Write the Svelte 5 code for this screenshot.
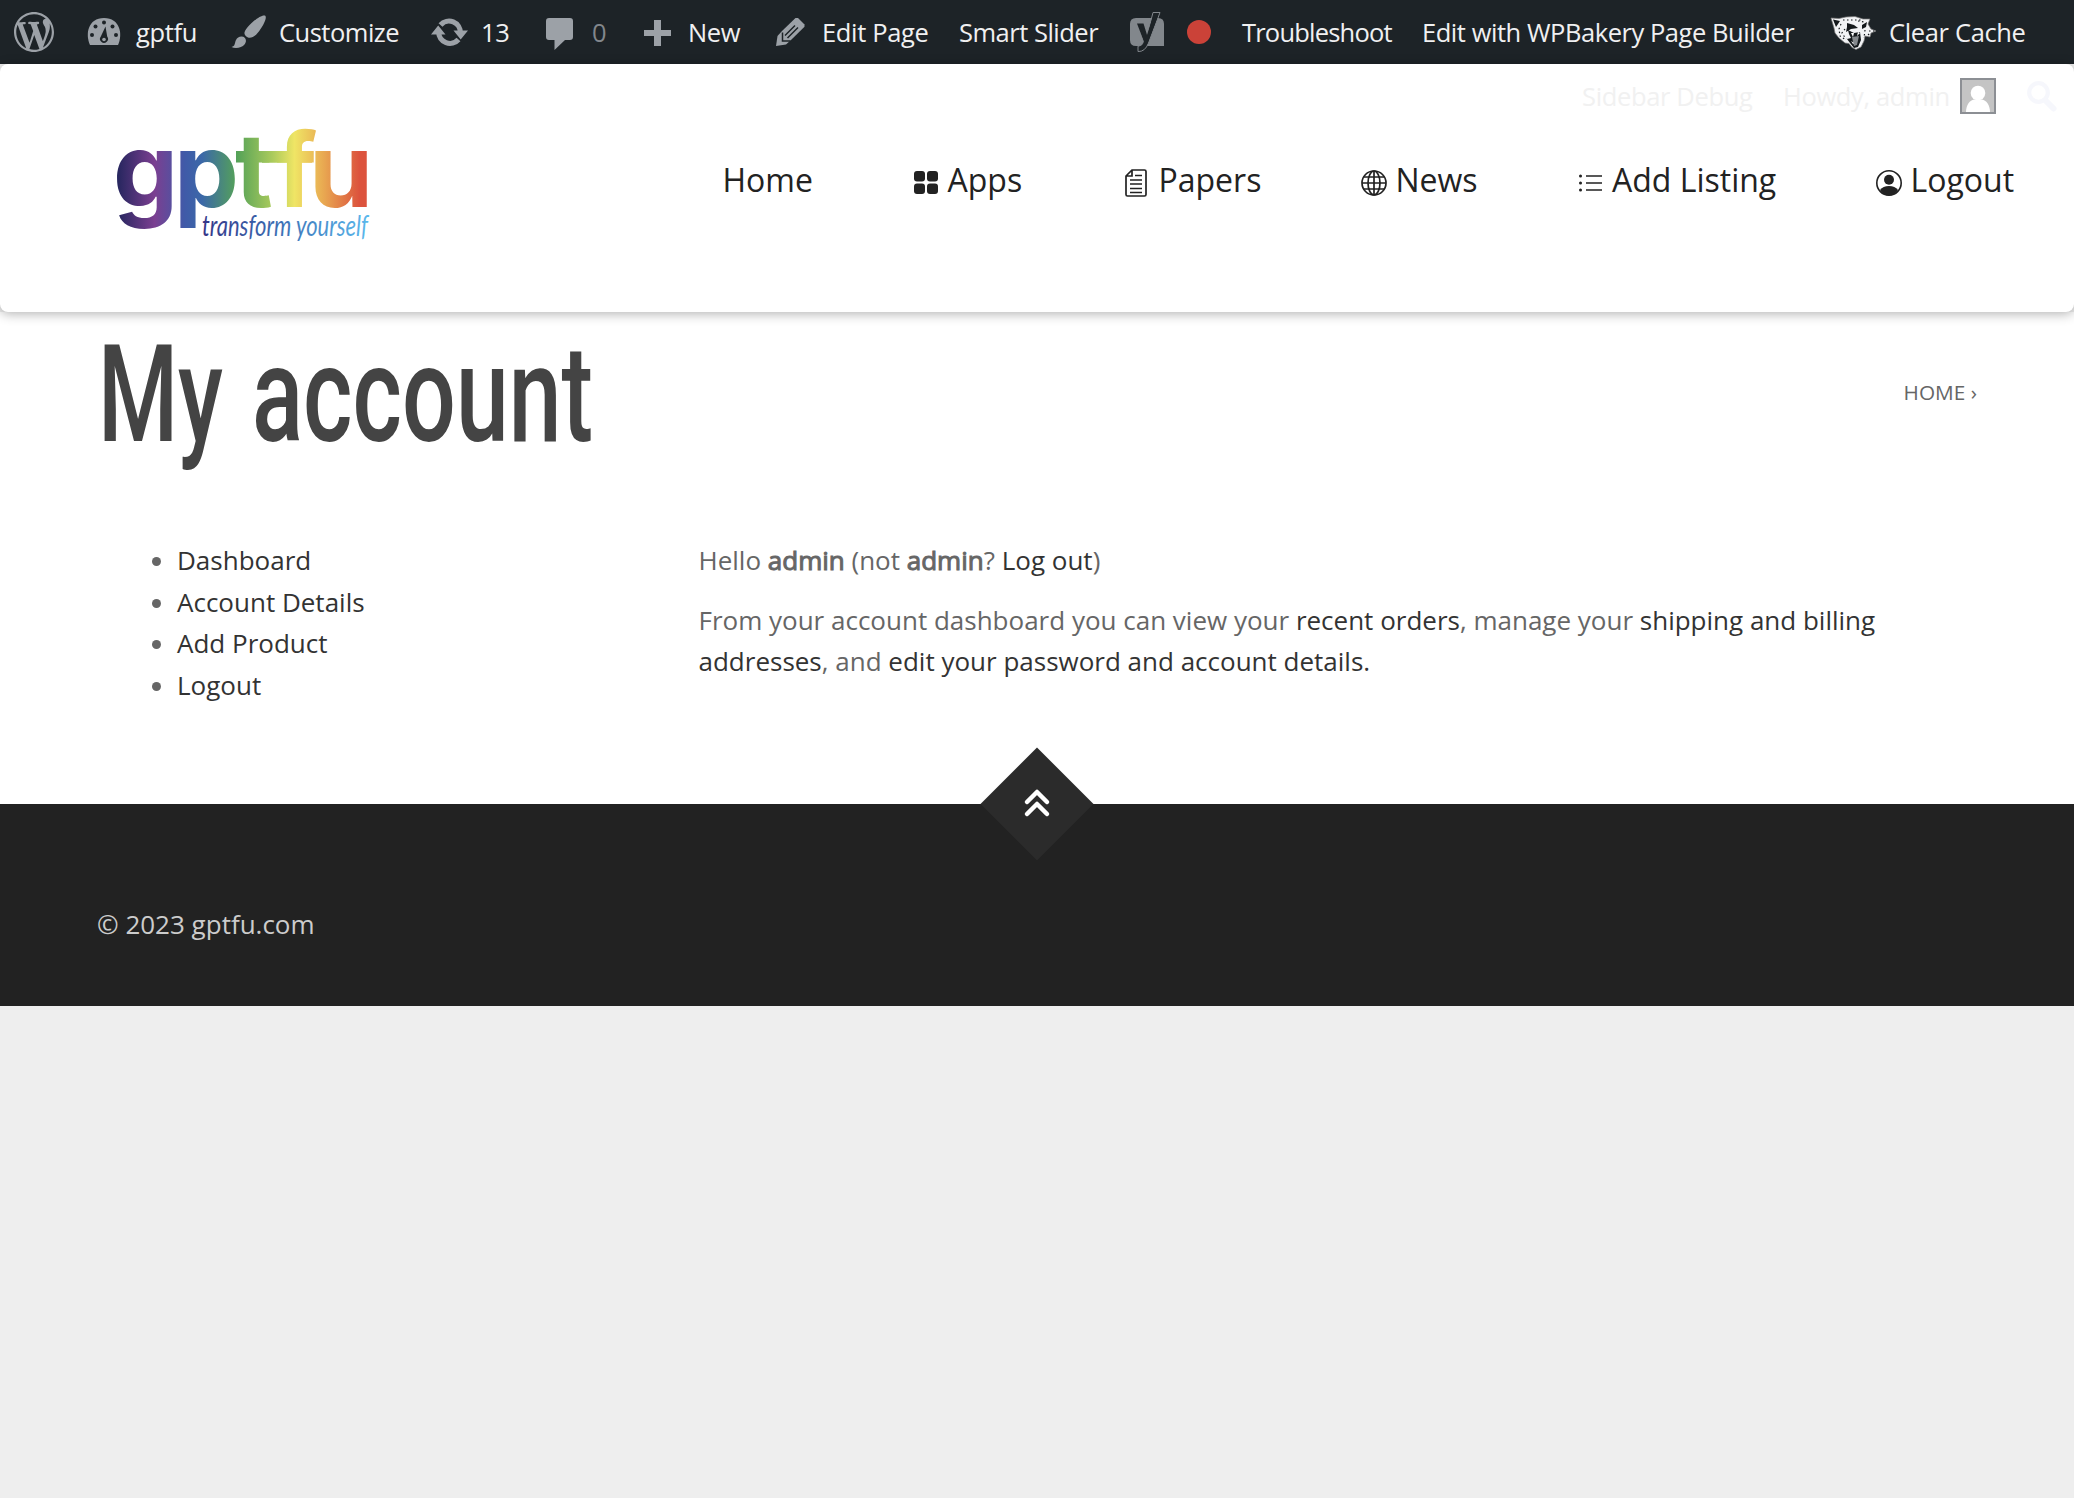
<script>
  const account = ['Dashboard', 'Account Details', 'Add Product', 'Logout'];
</script>

<div class="adminbar">
  <svg class="wp" viewBox="0 0 20 20"><path fill="#9ca1a7" fill-rule="evenodd" d="M20 10c0-5.51-4.49-10-10-10C4.48 0 0 4.49 0 10c0 5.52 4.48 10 10 10 5.51 0 10-4.48 10-10zM7.78 15.37L4.37 6.22c.55-.02 1.17-.08 1.17-.08.5-.06.44-1.13-.06-1.11 0 0-1.45.11-2.37.11-.18 0-.37 0-.58-.01C4.12 2.69 6.87 1.11 10 1.11c2.33 0 4.45.87 6.05 2.34-.68-.11-1.65.39-1.65 1.58 0 .74.45 1.36.9 2.1.35.61.55 1.36.55 2.46 0 1.49-1.4 5-1.4 5l-3.03-8.37c.54-.02.82-.17.82-.17.5-.05.44-1.25-.06-1.22 0 0-1.44.12-2.38.12-.87 0-2.33-.12-2.33-.12-.5-.03-.56 1.2-.06 1.22l.92.08 1.26 3.41zM17.41 10c.24-.64.74-1.87.43-4.25.7 1.29 1.05 2.71 1.05 4.25 0 3.29-1.73 6.24-4.4 7.78.97-2.59 1.94-5.2 2.92-7.78zM6.1 18.09C3.12 16.65 1.11 13.53 1.11 10c0-1.3.23-2.48.72-3.59C3.25 10.3 4.67 14.2 6.1 18.09zm4.03-6.63l2.58 6.98c-.86.29-1.76.45-2.71.45-.79 0-1.57-.11-2.29-.33.81-2.38 1.62-4.74 2.42-7.1z"/></svg>
  <svg class="dash" viewBox="0 0 34 28"><path fill="#9ca1a7" d="M3 27C-2 16 1 0 17 0s19 16 14 27z"/><g fill="#1d2327"><circle cx="17" cy="4.500" r="2"/><circle cx="8.500" cy="8.500" r="2"/><circle cx="25.500" cy="8.500" r="2"/><circle cx="5" cy="17" r="2"/><circle cx="29" cy="17" r="2"/><path d="M18.500 8.500l1.700 10a4 4 0 1 1-6.400 0z"/></g><circle cx="17" cy="21.500" r="1.800" fill="#9ca1a7"/></svg>
  <span class="t site">gptfu</span>
  <svg class="brush" viewBox="0 0 36 34"><path fill="#9ca1a7" d="M34 .5c3 2-3 12-7 17-3 4-7 6-10 5-2-1-4-3-3.500-5C15 12 29-1 34 .5zM10.500 21.500c4 0 6 4 3 8C11 33 4 34 .5 32c4-1 3-4 4.500-7 1-2 3-3.500 5.500-3.500z"/></svg>
  <span class="t customize">Customize</span>
  <svg class="sync" viewBox="0 0 37 29"><g fill="none" stroke="#9ca1a7" stroke-width="5.200"><path d="M9.500 7a11.300 11.300 0 0 1 19.800 8"/><path d="M27.500 21.500A11.300 11.300 0 0 1 7.700 14"/></g><path fill="#9ca1a7" d="M22.500 12.500H37l-7.300 9zM0 16.500h14.500l-7.300-9z"/></svg>
  <span class="t updates">13</span>
  <svg class="bubble" viewBox="0 0 28 32"><path fill="#9ca1a7" d="M3 0h21q3 0 3 3v16q0 3-3 3h-5L8.500 32V22H3q-3 0-3-3V3q0-3 3-3z"/></svg>
  <span class="t count">0</span>
  <svg class="plus" viewBox="0 0 27 26"><path fill="#9ca1a7" d="M10 0h7v10h10v6H17v10h-7V16H0v-6h10z"/></svg>
  <span class="t new">New</span>
  <svg class="pencil" viewBox="0 0 29 28"><path fill="#9ca1a7" d="M19.500 0h2.500l6.500 6.500v2.200L15 22 10 26.500 0 28 1.500 18 6 13z"/><path stroke="#1d2327" stroke-width="1.500" fill="none" d="M9 17.500L19 7.500M11.500 20L22 9.500M6.500 14.500v8.500h8"/></svg>
  <span class="t editpage">Edit Page</span>
  <span class="t slider">Smart Slider</span>
  <svg class="yoast" viewBox="0 0 34 41"><path fill="#82878c" d="M6 6h22q6 0 6 6v22H6q-6 0-6-6V12q0-6 6-6z"/><path fill="#1d2327" stroke="#82878c" stroke-width="1" d="M23 .5h7L18.500 31Q15 40 8 39.500v-5.300q5-.5 5.500-5L7.500 12h6l3.500 11.500z"/><path fill="#1d2327" d="M7 11.500h6.500L17 23l6-18h4.500L17.500 31Q14 38 9 38.500v-3.500q4.500-1 5-5.500z"/></svg>
  <i class="dot"></i>
  <span class="t trouble">Troubleshoot</span>
  <span class="t bakery">Edit with WPBakery Page Builder</span>
  <svg class="cat" viewBox="0 0 45 34"><path fill="#f2f3f5" stroke="#777" stroke-width=".7" d="M0 2l8 .5L15 1l9-.5 8 2.500 7 0-2 5 3 5 5 2-5 2-1 4-5-1-1 5-3 6-5 2.500-4-2-3-4-4-.5-6-5-4-5-1-5z"/><path fill="#15191c" d="M2 3.500l7 1.500-4 6zM16 7l7 2 4 3-7 1-5 3 1-5zM31 9l5-3-1 5-4 2zM17 14l6 3 6-1 1 8-3 7-4 1-4-5-3-4 4-1-2-4z"/><path fill="#85898d" d="M21 21l7-1-2 9-3 1-1-4z"/><path fill="#fff" d="M20 17l2 4 1-4zM27 16l-1 4 3-3zM20 25l2 3 1-1z"/><path stroke="#15191c" stroke-width="1.200" fill="none" stroke-dasharray="1.500 2.500" d="M12 4h18M10 8l-2 5 1 7 6 4M14 13l-3 4 4 6M34 14l-1 8M27 5l6 1M38 15h5m-6 3 4 3"/></svg>
  <span class="t cache">Clear Cache</span>
</div>

<header>
  <div class="secondary">
    <span class="t debug">Sidebar Debug</span>
    <span class="t howdy">Howdy, admin</span>
    <svg class="avatar" viewBox="0 0 36 36"><path fill="#c4c4c4" stroke="#8c8f94" stroke-width="2" d="M1 1h34v34H1z"/><circle cx="18" cy="15" r="7.300" fill="#fff"/><path fill="#fff" d="M6 34c0-7 4-12 8-12.500h8c4 .5 8 5.500 8 12.500z"/></svg>
    <svg class="search" viewBox="0 0 30 31"><g fill="none" stroke="#f6f7fc"><circle cx="11.500" cy="11.500" r="9.300" stroke-width="4.200"/><path stroke-width="6" stroke-linecap="round" d="M19.500 20.500l7 7"/></g></svg>
  </div>
  <div class="mainrow">
    <svg class="logo" viewBox="110 120 270 135">
      <defs>
        <linearGradient id="rainbow" gradientUnits="userSpaceOnUse" x1="117" x2="367" y1="0" y2="0"><stop offset="0" stop-color="#25265e"/><stop offset=".15" stop-color="#7b3f91"/><stop offset=".27" stop-color="#405aa8"/><stop offset=".34" stop-color="#3b68a8"/><stop offset=".48" stop-color="#55a258"/><stop offset=".62" stop-color="#a9ca5c"/><stop offset=".71" stop-color="#efe565"/><stop offset=".82" stop-color="#e9ac52"/><stop offset=".97" stop-color="#dc533d"/></linearGradient>
        <linearGradient id="tag" gradientUnits="userSpaceOnUse" x1="200" x2="370" y1="0" y2="0"><stop offset="0" stop-color="#343486"/><stop offset=".45" stop-color="#3c6db3"/><stop offset="1" stop-color="#5bb9ed"/></linearGradient>
      </defs>
      <text class="word" y="207" x="113 174 235 276 309" fill="url(#rainbow)">gptfu</text>
      <path fill="url(#rainbow)" d="M262 151h50v11.700h-50z"/>
      <text class="tagline" x="202" y="236" textLength="166" lengthAdjust="spacingAndGlyphs" fill="url(#tag)">transform yourself</text>
    </svg>
    <nav>
      <a class="home">Home</a>
      <a class="apps"><svg width="24" height="23" viewBox="0 0 24 23" fill="#222"><rect width="11" height="10.500" rx="3"/><rect x="13" width="11" height="10.500" rx="3"/><rect y="12.500" width="11" height="10.500" rx="3"/><rect x="13" y="12.500" width="11" height="10.500" rx="3"/></svg>Apps</a>
      <a class="papers"><svg width="22" height="28" viewBox="0 0 22 28" fill="none" stroke="#222" stroke-width="1.700"><path d="M7 1h12.500Q21 1 21 2.500v23q0 1.500-1.500 1.500h-17Q1 27 1 25.500V7zM7 1v6H1M10 6.500h7M5 11h12M5 15h12M5 19.500h12M5 23.500h12"/></svg>Papers</a>
      <a class="news"><svg width="26" height="26" viewBox="0 0 26 26" fill="none" stroke="#222" stroke-width="1.700"><circle cx="13" cy="13" r="12"/><ellipse cx="13" cy="13" rx="6" ry="12"/><path d="M13 1v24M1 13h24M3 7h20M3 19h20"/></svg>News</a>
      <a class="add"><svg width="23" height="18" viewBox="0 0 23 18" fill="none" stroke="#222" stroke-width="1.600"><path d="M7 2h16M7 9h16M7 16h16"/><path stroke-width="3" stroke-linecap="round" d="M1.500 2h.01M1.500 9h.01M1.500 16h.01"/></svg>Add Listing</a>
      <a class="logout"><svg width="26" height="26" viewBox="0 0 26 26"><circle cx="13" cy="13" r="12.200" fill="none" stroke="#222" stroke-width="1.600"/><circle cx="13" cy="9.700" r="5" fill="#222"/><path fill="#222" d="M4 20q3-4 9-4t9 4q-3 5.500-9 5.500T4 20z"/></svg>Logout</a>
    </nav>
  </div>
</header>

<main>
  <div class="titlebar">
    <h1><svg viewBox="97 312 520 160"><text x="98" y="441" textLength="125" lengthAdjust="spacingAndGlyphs">My</text><text x="252" y="441" textLength="341" lengthAdjust="spacingAndGlyphs">account</text></svg></h1>
    <span class="crumb">HOME ›</span>
  </div>
  <div class="content">
    <ul>
      {#each account as item}<li><a>{item}</a></li>{/each}
    </ul>
    <section>
      <p>Hello <strong>admin</strong> (not <strong>admin</strong>? <a>Log out</a>)</p>
      <p>From your account dashboard you can view your <a>recent orders</a>, manage your <a>shipping and billing addresses</a>, and <a>edit your password and account details.</a></p>
    </section>
  </div>
</main>

<footer>
  <svg class="top" viewBox="0 0 114 114"><path fill="#2b2b2b" d="M57 .5l56.500 56.500L57 113.500.5 57z"/><path fill="none" stroke="#fff" stroke-width="4.500" stroke-linecap="round" stroke-linejoin="round" d="M47 55l10-10 10 10M47 67l10-10 10 10"/></svg>
  <span>© 2023 gptfu.com</span>
</footer>

<style>
  :global(body) { background: #eee; font-family: "Open Sans", sans-serif; }
  svg { display: block; flex: none; overflow: visible; }
  .adminbar { height: 64px; background: #1d2327; display: flex; align-items: center; color: #f0f0f1; }
  .adminbar .t, .secondary .t { font-size: 25.5px; line-height: 64px; white-space: nowrap; flex: none; letter-spacing: -0.35px; height: 64px; }
  .wp { width: 40px; margin-left: 14px; }
  .dash { width: 34px; margin: 0 14px 0 33px; }
  .site { width: 95px; margin-left: 1px; }
  .brush { width: 36px; }
  .adminbar .customize { width: 138px; margin: 0 14px 0 12px; letter-spacing: -0.5px; }
  .sync { width: 37px; }
  .updates { width: 51px; margin-left: 13px; }
  .bubble { width: 28px; margin-left: 14px; margin-top: 4px; }
  .count { width: 37px; margin-left: 18px; color: #82878c; }
  .plus { width: 27px; margin-left: 15px; margin-top: 2px; }
  .new { width: 72px; margin-left: 17px; }
  .pencil { width: 29px; margin-left: 16px; }
  .editpage { width: 137px; margin-left: 17px; }
  .adminbar .slider { width: 157px; letter-spacing: -0.5px; }
  .yoast { width: 34px; margin-left: 14px; }
  .dot { width: 24px; height: 24px; border-radius: 50%; background: #cb4238; margin: 0 31px 0 23px; flex: none; }
  .adminbar .trouble { width: 180px; letter-spacing: -0.8px; }
  .adminbar .bakery { width: 396px; letter-spacing: -0.45px; }
  .cat { width: 45px; margin: 2px 0 0 13px; }
  .cache { margin-left: 13px; }
  header { height: 248px; background: #fff; border-radius: 8px; box-shadow: 0 2px 12px rgba(0,0,0,.3); position: relative; }
  .secondary { height: 64px; display: flex; align-items: center; justify-content: flex-end; padding-right: 17px; color: #f1f1f1; }
  .debug { width: 201px; }
  .howdy { width: 177px; }
  .avatar { width: 36px; margin-right: 31px; }
  .search { width: 30px; }
  .mainrow { display: flex; }
  .logo { width: 270px; height: 135px; margin: -8px 0 0 110px; }
  .word { font: 700 103px Inter, sans-serif; }
  .tagline { font: italic 400 28px Lato, sans-serif; }
  nav { display: flex; font-size: 32px; color: #222; height: 60px; margin: 22px 0 0 342.500px; line-height: 60px; }
  nav a { display: flex; align-items: center; white-space: nowrap; flex: none; }
  nav svg { margin-top: 5px; }
  .home { width: 191.500px; }
  .apps { width: 210.500px; gap: 9.500px; }
  .papers { width: 236px; gap: 12px; }
  .news { width: 218.500px; gap: 9px; }
  .add { width: 296.500px; gap: 10px; }
  .logout { gap: 9px; }
  main { background: #fff; height: 492px; }
  .titlebar { display: flex; height: 160px; justify-content: space-between; padding: 0 97px; }
  h1 { margin: 0; }
  h1 svg { width: 520px; height: 160px; }
  h1 text { font: 500 136px Roboto, sans-serif; fill: #444; }
  .crumb { font-size: 20.800px; line-height: 161px; color: #666; }
  .content { display: flex; font-size: 26px; line-height: 41.600px; color: #666; padding: 68px 97px 0; }
  ul { margin: 0; padding-left: 80px; width: 521.500px; }
  .content a { color: #333; }
  strong { font-weight: 400; -webkit-text-stroke: 1px #666; }
  section { width: 1240px; }
  p { margin: 0 0 18px; }
  footer { height: 202px; background: #222; color: #ccc; font-size: 26px; display: flex; align-items: center; padding: 38px 97px 0; box-sizing: border-box; position: relative; }
  .top { width: 114px; height: 114px; position: absolute; left: 980px; top: -57px; }
</style>
